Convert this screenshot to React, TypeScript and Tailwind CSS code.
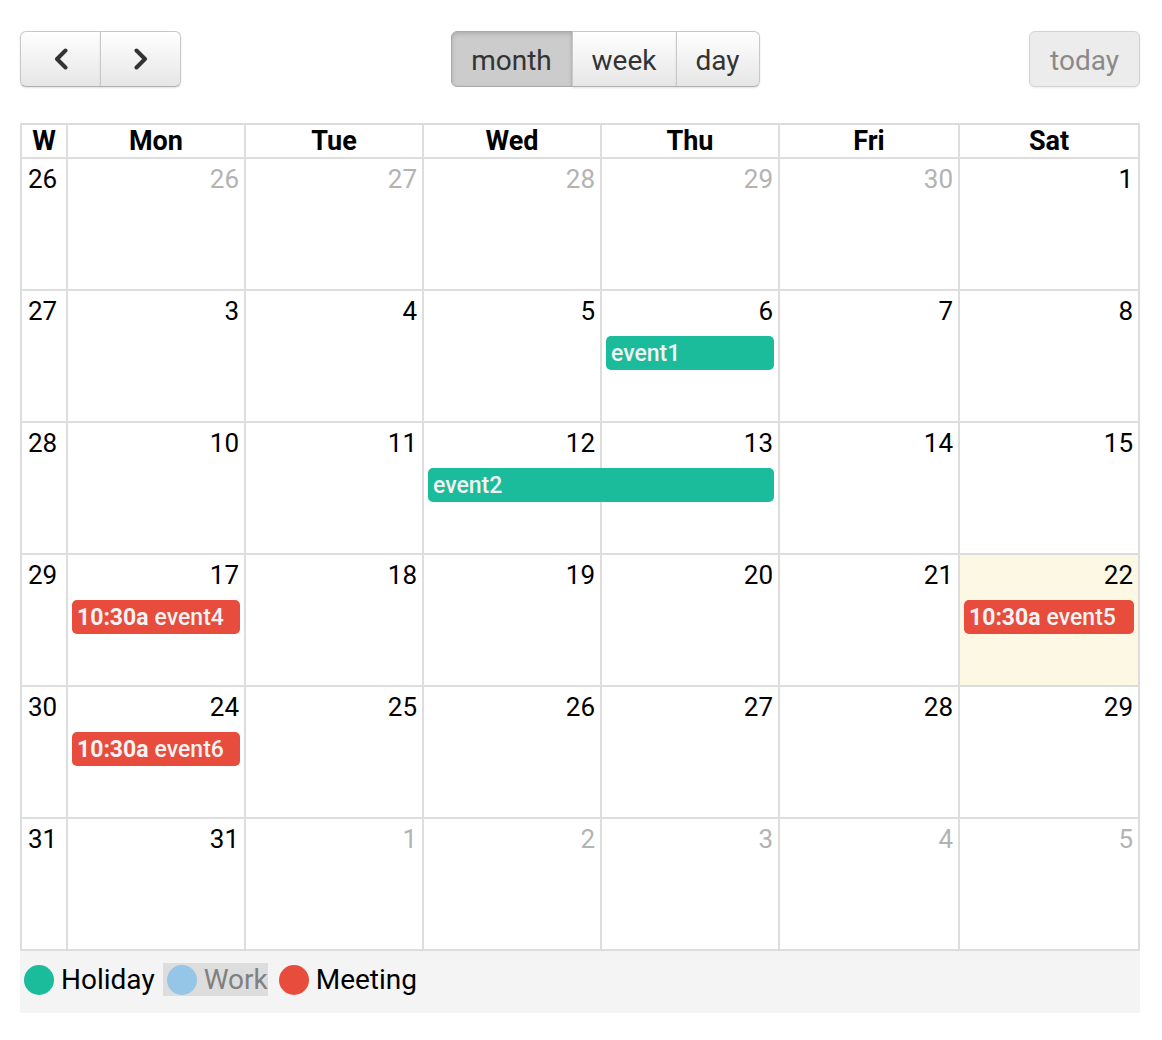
import React from 'react';

type Ev = { col: number; span: number; title: string; time?: string; color: 'green' | 'red' };
type Week = { num: number; days: { d: number; other?: boolean; today?: boolean }[]; events: Ev[] };

const weeks: Week[] = [
  { num: 26, days: [{ d: 26, other: true }, { d: 27, other: true }, { d: 28, other: true }, { d: 29, other: true }, { d: 30, other: true }, { d: 1 }], events: [] },
  { num: 27, days: [{ d: 3 }, { d: 4 }, { d: 5 }, { d: 6 }, { d: 7 }, { d: 8 }], events: [{ col: 4, span: 1, title: 'event1', color: 'green' }] },
  { num: 28, days: [{ d: 10 }, { d: 11 }, { d: 12 }, { d: 13 }, { d: 14 }, { d: 15 }], events: [{ col: 3, span: 2, title: 'event2', color: 'green' }] },
  {
    num: 29,
    days: [{ d: 17 }, { d: 18 }, { d: 19 }, { d: 20 }, { d: 21 }, { d: 22, today: true }],
    events: [
      { col: 1, span: 1, title: 'event4', time: '10:30a', color: 'red' },
      { col: 6, span: 1, title: 'event5', time: '10:30a', color: 'red' },
    ],
  },
  { num: 30, days: [{ d: 24 }, { d: 25 }, { d: 26 }, { d: 27 }, { d: 28 }, { d: 29 }], events: [{ col: 1, span: 1, title: 'event6', time: '10:30a', color: 'red' }] },
  { num: 31, days: [{ d: 31 }, { d: 1, other: true }, { d: 2, other: true }, { d: 3, other: true }, { d: 4, other: true }, { d: 5, other: true }], events: [] },
];

const colStart = ['col-start-2', 'col-start-3', 'col-start-4', 'col-start-5', 'col-start-6', 'col-start-7'];
const colSpan = ['col-span-1', 'col-span-2', 'col-span-3'];
const dayNames = ['Mon', 'Tue', 'Wed', 'Thu', 'Fri', 'Sat'];
const cols = 'grid-cols-[46px_178px_178px_178px_178px_180px_180px]';

const Chevron = ({ dir }: { dir: 'left' | 'right' }) => (
  <svg width="16" height="22" viewBox="0 0 16 22" fill="none">
    <path
      d={dir === 'left' ? 'M12.5 2.5 L4 11 L12.5 19.5' : 'M3.5 2.5 L12 11 L3.5 19.5'}
      stroke="#333"
      strokeWidth="4"
      strokeLinecap="round"
      strokeLinejoin="round"
    />
  </svg>
);

const btn =
  'h-[56px] flex items-center justify-center border border-[#c8c8c8] border-b-[#b0b0b0] bg-gradient-to-b from-[#ffffff] to-[#e6e6e6] text-[#333] text-[28px] leading-none shadow-[0_1px_2px_rgba(0,0,0,0.12)]';

export default function App() {
  return (
    <div className="w-[1162px] min-h-[1040px] bg-white font-['Roboto','Liberation_Sans',sans-serif] text-black">
      <div className="ml-[20px] w-[1120px] pt-[31px]">
        {/* Toolbar */}
        <div className="flex items-start h-[56px] mb-[36px]">
          <div className="flex">
            <button className={`${btn} w-[81px] rounded-l-[6px]`}>
              <Chevron dir="left" />
            </button>
            <button className={`${btn} w-[81px] -ml-px rounded-r-[6px]`}>
              <Chevron dir="right" />
            </button>
          </div>
          <div className="flex-1 flex justify-center">
            <div className="flex">
              <button className="h-[56px] w-[122px] pt-[3px] flex items-center justify-center rounded-l-[6px] border border-[#a8a8a8] bg-[#cccccc] text-[#333] text-[28px] leading-none shadow-[inset_0_2px_4px_rgba(0,0,0,0.15)]">
                month
              </button>
              <button className={`${btn} pt-[3px] w-[105px] -ml-px`}>week</button>
              <button className={`${btn} pt-[3px] w-[84px] -ml-px rounded-r-[6px]`}>day</button>
            </div>
          </div>
          <button className="h-[56px] w-[111px] pt-[3px] flex items-center justify-center rounded-[6px] border border-[#d2d2d2] bg-[#ececec] text-[#8a8a8a] text-[28px] leading-none shadow-[0_1px_2px_rgba(0,0,0,0.08)]">
            today
          </button>
        </div>

        {/* Calendar */}
        <div className="border-l-2 border-t-2 border-[#dddddd]">
          <div className={`grid ${cols} h-[34px]`}>
            <div className="border-r-2 border-b-2 border-[#dddddd] flex items-center justify-center text-[27px] leading-none font-bold">W</div>
            {dayNames.map((n) => (
              <div key={n} className="border-r-2 border-b-2 border-[#dddddd] flex items-center justify-center text-[27px] leading-none font-bold">
                {n}
              </div>
            ))}
          </div>
          {weeks.map((w) => (
            <div key={w.num} className={`grid ${cols} grid-rows-[45px_34px_1fr] h-[132px]`}>
              <div className="col-start-1 row-start-1 row-span-3 border-r-2 border-b-2 border-[#dddddd] pl-[6px] pt-[5px] text-[26px] leading-[30px]">
                {w.num}
              </div>
              {w.days.map((d, i) => (
                <div
                  key={i}
                  className={`${colStart[i]} row-start-1 row-span-3 border-r-2 border-b-2 border-[#dddddd] pr-[5px] pt-[5px] text-right text-[26px] leading-[30px] ${
                    d.other ? 'text-[#b3b3b3]' : 'text-black'
                  } ${d.today ? 'bg-[#fcf8e3]' : ''}`}
                >
                  {d.d}
                </div>
              ))}
              {w.events.map((e, i) => (
                <div
                  key={i}
                  className={`${colStart[e.col - 1]} ${colSpan[e.span - 1]} row-start-2 ml-[4px] mr-[6px] rounded-[5px] px-[5px] flex items-center text-[23px] leading-none text-[#f2f2f2] whitespace-nowrap overflow-hidden ${
                    e.color === 'green' ? 'bg-[#1abc9c]' : 'bg-[#e74c3c]'
                  }`}
                >
                  {e.time && <span className="font-bold mr-[6px]">{e.time}</span>}
                  <span className="font-medium">{e.title}</span>
                </div>
              ))}
            </div>
          ))}
        </div>

        {/* Legend */}
        <div className="h-[62px] bg-[#f4f4f4] pt-[12px] flex items-start gap-[4px]">
          <div className="h-[33px] flex items-center gap-[7px] px-[4px]">
            <span className="w-[30px] h-[30px] rounded-full bg-[#1abc9c]" />
            <span className="text-[28px] leading-none">Holiday</span>
          </div>
          <div className="h-[33px] flex items-center gap-[7px] pl-[4px] bg-[#dddddd]">
            <span className="w-[30px] h-[30px] rounded-full bg-[#95c6e8]" />
            <span className="text-[28px] leading-none text-[#808080]">Work</span>
          </div>
          <div className="h-[33px] flex items-center gap-[7px] px-[4px] ml-[3px]">
            <span className="w-[30px] h-[30px] rounded-full bg-[#e74c3c]" />
            <span className="text-[28px] leading-none">Meeting</span>
          </div>
        </div>
      </div>
    </div>
  );
}
